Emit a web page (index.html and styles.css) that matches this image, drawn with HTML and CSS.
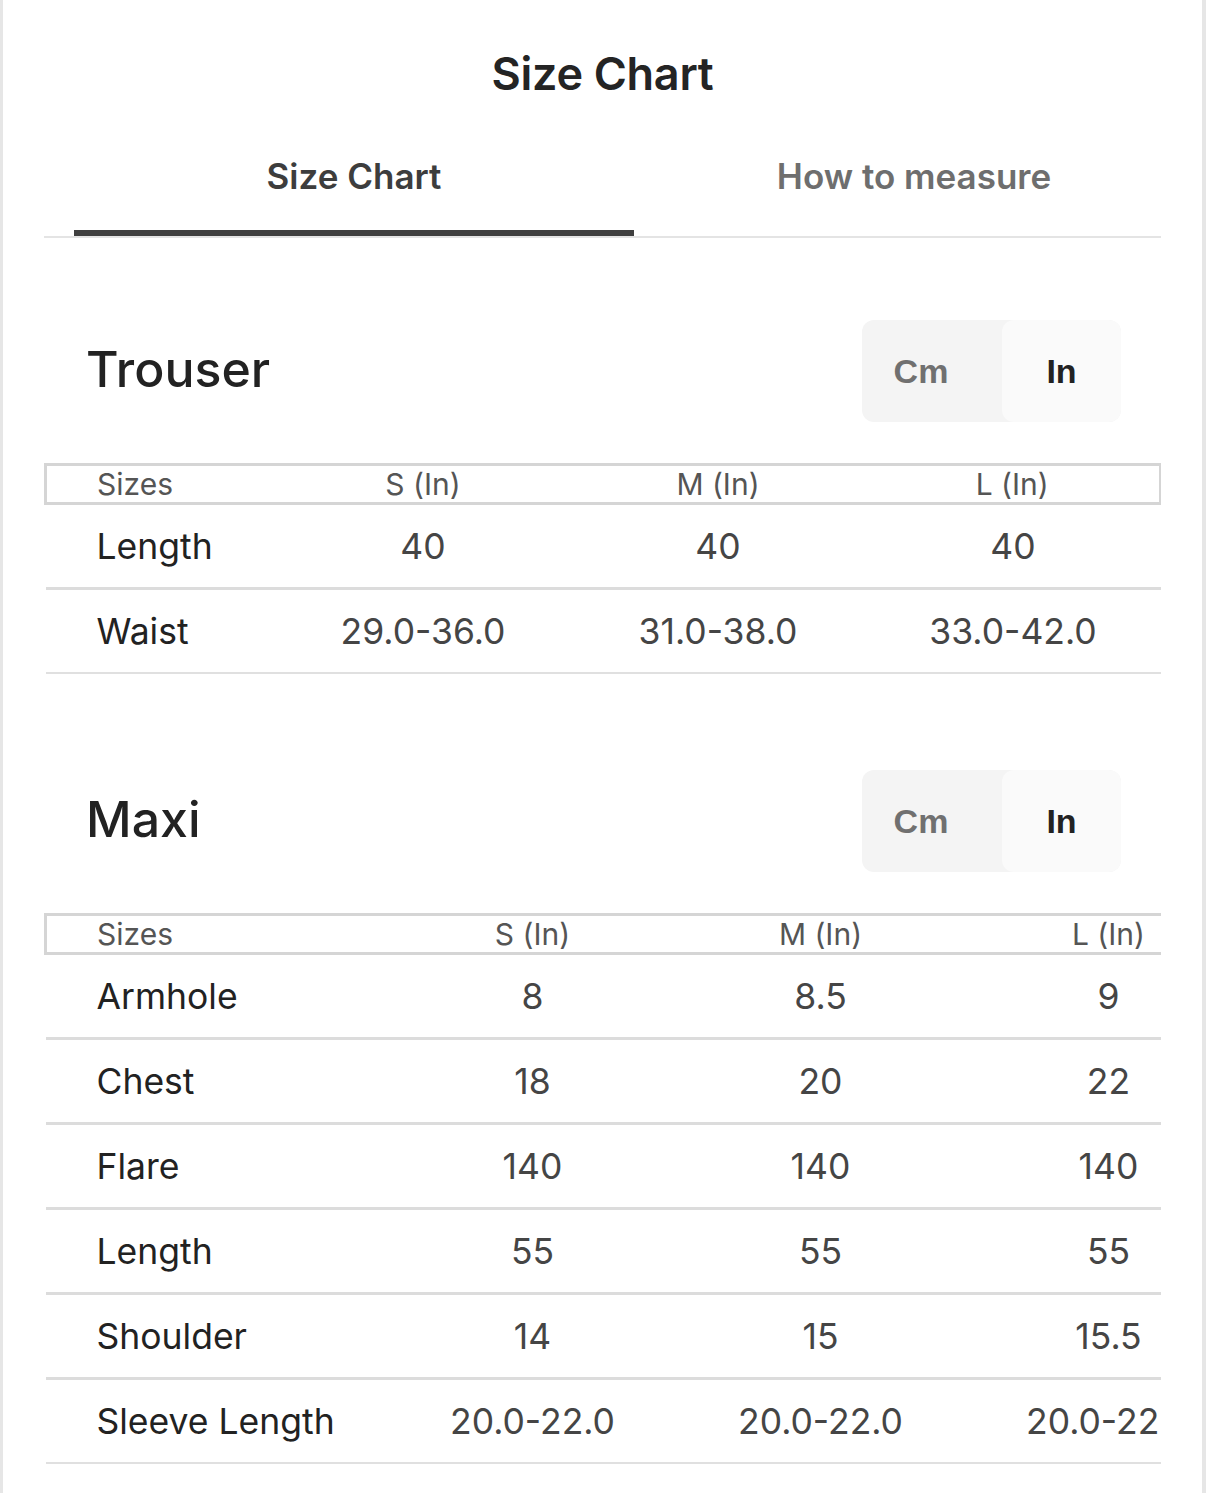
FILE: index.html
```html
<!DOCTYPE html>
<html>
<head>
<meta charset="utf-8">
<link rel="stylesheet" href="styles.css">
</head>
<body>
<div class="page">
  <h1 class="title">Size Chart</h1>
  <div class="tabs">
    <div class="tab active">Size Chart</div>
    <div class="tab">How to measure</div>
  </div>

  <section class="section">
    <div class="section-head">
      <h2 class="section-title">Trouser</h2>
      <div class="toggle">
        <div class="opt">Cm</div>
        <div class="opt on">In</div>
      </div>
    </div>
    <div class="table-wrap">
      <table class="chart trouser">
        <colgroup><col class="c0"><col class="c1"><col class="c1"><col class="c1"></colgroup>
        <thead>
          <tr><th class="lab">Sizes</th><th>S (In)</th><th>M (In)</th><th>L (In)</th></tr>
        </thead>
        <tbody>
          <tr><td class="lab">Length</td><td>40</td><td>40</td><td>40</td></tr>
          <tr class="thin"><td class="lab">Waist</td><td>29.0-36.0</td><td>31.0-38.0</td><td>33.0-42.0</td></tr>
        </tbody>
      </table>
    </div>
  </section>

  <section class="section maxi">
    <div class="section-head">
      <h2 class="section-title">Maxi</h2>
      <div class="toggle">
        <div class="opt">Cm</div>
        <div class="opt on">In</div>
      </div>
    </div>
    <div class="table-wrap">
      <table class="chart wide">
        <colgroup><col class="w0"><col class="w1"><col class="w1"><col class="w1"></colgroup>
        <thead>
          <tr><th class="lab">Sizes</th><th>S (In)</th><th>M (In)</th><th>L (In)</th></tr>
        </thead>
        <tbody>
          <tr><td class="lab">Armhole</td><td>8</td><td>8.5</td><td>9</td></tr>
          <tr><td class="lab">Chest</td><td>18</td><td>20</td><td>22</td></tr>
          <tr><td class="lab">Flare</td><td>140</td><td>140</td><td>140</td></tr>
          <tr><td class="lab">Length</td><td>55</td><td>55</td><td>55</td></tr>
          <tr><td class="lab">Shoulder</td><td>14</td><td>15</td><td>15.5</td></tr>
          <tr class="thin"><td class="lab">Sleeve Length</td><td>20.0-22.0</td><td>20.0-22.0</td><td>20.0-22.0</td></tr>
        </tbody>
      </table>
    </div>
  </section>
</div>
</body>
</html>
```
FILE: styles.css
```css
html, body {
  margin: 0;
  padding: 0;
  background: #ffffff;
}
body {
  font-family: "Inter", "Liberation Sans", sans-serif;
  color: #222;
}
.page {
  box-sizing: border-box;
  width: 1206px;
  min-height: 1493px;
  border-left: 3px solid #e6e6e6;
  border-right: 4px solid #e6e6e6;
  padding: 0 41px 0 41px;
}
.title {
  margin: 0;
  padding-top: 46px;
  height: 56px;
  line-height: 56px;
  text-align: center;
  font-size: 45px;
  font-weight: 600;
  color: #242424;
  letter-spacing: -0.3px;
}
.tabs {
  display: flex;
  margin-top: 20px;
  padding-left: 30px;
  border-bottom: 2px solid #e4e4e4;
  height: 116px;
  box-sizing: border-box;
}
.tab {
  flex: 0 0 560px;
  text-align: center;
  font-size: 35px;
  font-weight: 600;
  color: #6e6e6e;
  line-height: 42px;
  padding-top: 33px;
  box-sizing: border-box;
  height: 114px;
}
.tab.active {
  color: #3d3d3d;
  border-bottom: 6px solid #3f3f3f;
}
.section {
  margin-top: 80px;
}
.maxi {
  margin-top: 94px;
}
.section-head {
  display: flex;
  align-items: center;
  justify-content: space-between;
  padding-left: 42px;
  padding-right: 40px;
  height: 102px;
}
.section-title {
  margin: 0;
  font-size: 50px;
  font-weight: 500;
  color: #222;
}
.toggle {
  display: flex;
  width: 259px;
  height: 102px;
  margin-top: 4px;
  background: #f4f4f4;
  border-radius: 12px;
  overflow: hidden;
}
.opt {
  flex: 0 0 140px;
  display: flex;
  align-items: center;
  justify-content: center;
  padding-right: 22px;
  box-sizing: border-box;
  font-family: "Liberation Sans", "Inter", sans-serif;
  font-size: 34px;
  font-weight: 700;
  color: #707070;
}
.opt.on {
  flex: 1 1 auto;
  padding-right: 0;
  background: #fafafa;
  border-radius: 12px;
  color: #222;
}
.table-wrap {
  margin-top: 43px;
  width: 1117px;
  overflow: hidden;
}
.chart {
  border-collapse: collapse;
  table-layout: fixed;
}
.trouser { width: 1117px; }
.wide { width: 1207px; }
.c0 { width: 230px; }
.c1 { width: 295px; }
.w0 { width: 343px; }
.w1 { width: 288px; }
.chart th {
  height: 36px;
  padding: 0;
  font-size: 30px;
  font-weight: 400;
  color: #555;
  text-align: center;
  border-top: 3px solid #d5d5d5;
  border-bottom: 3px solid #d5d5d5;
}
.chart th.lab {
  text-align: left;
  padding-left: 50px;
  border-left: 3px solid #d5d5d5;
}
.trouser th:last-child {
  border-right: 3px solid #d5d5d5;
}
.chart td {
  height: 82px;
  padding: 0;
  font-size: 35.5px;
  color: #454545;
  text-align: center;
  border-bottom: 3px solid #dcdcdc;
  white-space: nowrap;
}
.chart tr.thin td {
  border-bottom: 2px solid #e0e0e0;
}
.chart td.lab {
  text-align: left;
  padding-left: 51px;
  color: #222;
  font-weight: 420;
}
```
